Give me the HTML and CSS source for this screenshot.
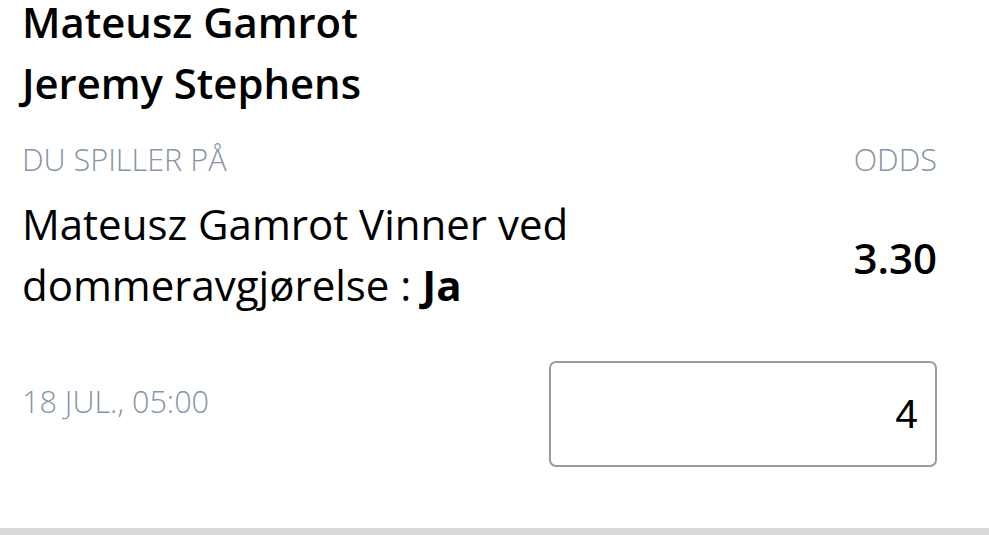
FILE: index.html
```html
<!DOCTYPE html>
<html>
<head>
<meta charset="utf-8">
<link rel="stylesheet" href="styles.css">
</head>
<body>
<div class="card">
  <div class="inner">
    <div class="title">
      <div>Mateusz Gamrot</div>
      <div>Jeremy Stephens</div>
    </div>
    <div class="labels">
      <span>DU SPILLER PÅ</span>
      <span>ODDS</span>
    </div>
    <div class="selection">
      <div class="sel-text">Mateusz Gamrot Vinner ved dommeravgjørelse : <b>Ja</b></div>
      <div class="odds">3.30</div>
    </div>
    <div class="stake-row">
      <div class="date">18 JUL., 05:00</div>
      <div class="stake">4</div>
    </div>
  </div>
  <div class="divider"></div>
</div>
</body>
</html>
```
FILE: styles.css
```css
html, body {
  margin: 0;
  padding: 0;
  background: #fff;
  overflow: hidden;
}
body {
  font-family: "Open Sans", "Noto Sans", sans-serif;
  color: #000;
}
.inner {
  padding: 0 52px 0 22px;
}
.title {
  font-size: 41.8px;
  line-height: 61px;
  font-weight: 600;
  margin-top: -9px;
}
.labels {
  display: flex;
  justify-content: space-between;
  font-size: 30.6px;
  line-height: 40px;
  font-weight: 300;
  color: #8694a6;
  margin-top: 26px;
}
.selection {
  display: flex;
  justify-content: space-between;
  align-items: center;
  margin-top: 14px;
}
.sel-text {
  font-size: 42px;
  line-height: 61px;
  flex: 1;
}
.sel-text b {
  font-weight: 700;
}
.odds {
  font-size: 42px;
  font-weight: 600;
  margin-left: 20px;
  margin-top: 6px;
}
.stake-row {
  display: flex;
  justify-content: space-between;
  align-items: flex-start;
  margin-top: 46px;
}
.date {
  font-size: 30.6px;
  line-height: 40px;
  font-weight: 300;
  color: #8694a6;
  margin-top: 20px;
}
.stake {
  width: 388px;
  height: 106px;
  box-sizing: border-box;
  border: 2.5px solid #9b9b9b;
  border-radius: 7px;
  font-family: "Liberation Sans", Arial, sans-serif;
  font-size: 41px;
  display: flex;
  align-items: center;
  justify-content: flex-end;
  padding-right: 17px;
}
.divider {
  margin-top: 61px;
  height: 10px;
  background: #d9d9d9;
}
```
